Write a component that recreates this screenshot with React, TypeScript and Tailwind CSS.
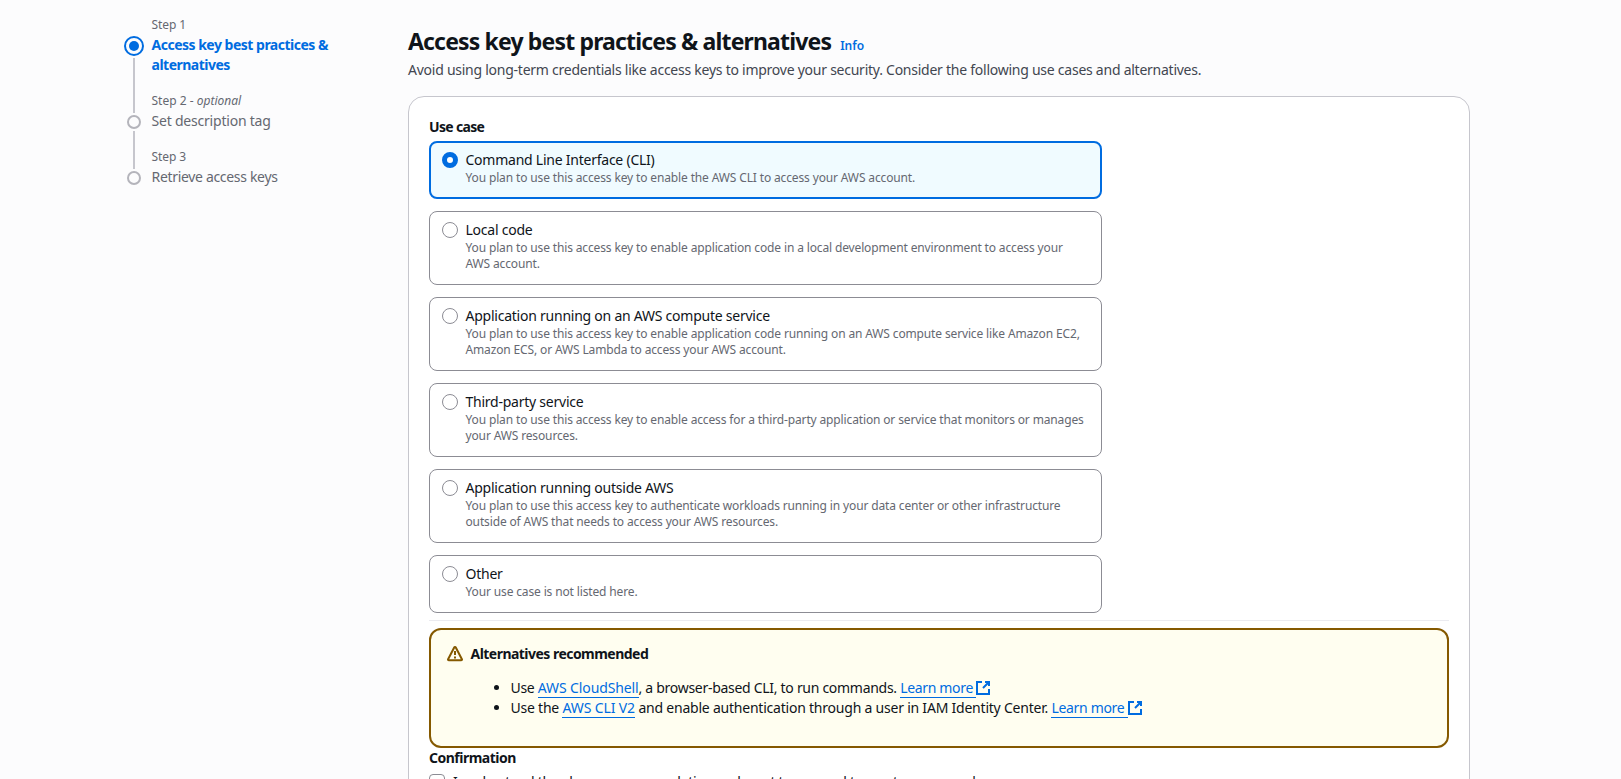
import type { ReactNode } from 'react';

type UseCase = { title: string; description: string };

const useCases: UseCase[] = [
  {
    title: 'Command Line Interface (CLI)',
    description: 'You plan to use this access key to enable the AWS CLI to access your AWS account.',
  },
  {
    title: 'Local code',
    description:
      'You plan to use this access key to enable application code in a local development environment to access your AWS account.',
  },
  {
    title: 'Application running on an AWS compute service',
    description:
      'You plan to use this access key to enable application code running on an AWS compute service like Amazon EC2, Amazon ECS, or AWS Lambda to access your AWS account.',
  },
  {
    title: 'Third-party service',
    description:
      'You plan to use this access key to enable access for a third-party application or service that monitors or manages your AWS resources.',
  },
  {
    title: 'Application running outside AWS',
    description:
      'You plan to use this access key to authenticate workloads running in your data center or other infrastructure outside of AWS that needs to access your AWS resources.',
  },
  { title: 'Other', description: 'Your use case is not listed here.' },
];

function ExternalIcon() {
  return (
    <svg
      viewBox="0 0 16 16"
      className="-ml-px inline-block size-4 align-[-3px]"
      fill="none"
      stroke="#006ce0"
      strokeWidth="2"
    >
      <path d="M10 2h4v4M8 8l6-6" />
      <path d="M14 9v5H2V2h5" />
    </svg>
  );
}

function WarningIcon() {
  return (
    <svg viewBox="0 0 16 16" className="size-4" fill="none" stroke="#855900" strokeWidth="2" strokeLinejoin="round">
      <path d="M7.2 1.5 1.1 13.2c-.3.6.1 1.1.8 1.1h12.2c.7 0 1.1-.5.8-1.1L8.8 1.5c-.3-.6-1.3-.6-1.6 0z" />
      <path d="M8 5v4M8 10.500v2" />
    </svg>
  );
}

function Link({ children }: { children: ReactNode }) {
  return (
    <a href="#" className="border-b border-[#006ce0] tracking-[-0.12px] text-[#006ce0]">
      {children}
    </a>
  );
}

function LearnMore() {
  return (
    <>
      <a href="#" className="border-b border-[#006ce0] tracking-[-0.33px] text-[#006ce0]">
        Learn more&nbsp;
      </a>
      <ExternalIcon />
    </>
  );
}

function Radio({ checked }: { checked: boolean }) {
  return (
    <span
      className={
        checked
          ? 'mt-0.5 size-4 shrink-0 rounded-full border-[5px] border-[#006ce0] bg-white'
          : 'mt-0.5 size-4 shrink-0 rounded-full border border-[#8c8c94] bg-white'
      }
    />
  );
}

function Tile({ item, selected }: { item: UseCase; selected: boolean }) {
  return (
    <label
      className={
        selected
          ? 'flex gap-[7.5px] rounded-lg border-2 border-[#006ce0] bg-[#f0fbff] px-[11px] pt-[7px] pb-[11px]'
          : 'flex gap-[7.5px] rounded-lg border border-[#8c8c94] bg-white px-3 pt-2 pb-3'
      }
    >
      <Radio checked={selected} />
      <span className="block">
        <span className="block text-sm leading-5 tracking-[-0.24px]">{item.title}</span>
        <span className="block text-xs leading-4 tracking-[-0.14px] text-[#656871]">{item.description}</span>
      </span>
    </label>
  );
}

function Steps() {
  return (
    <nav className="w-[220px] pt-[17px]">
      <ol className="text-sm leading-5 text-[#656871]">
        <li className="flex h-[76px] gap-[7.5px]">
          <div className="flex w-5 flex-col items-center pt-[19px]">
            <span className="flex size-5 shrink-0 items-center justify-center rounded-full border-2 border-[#006ce0]">
              <span className="size-2.5 rounded-full bg-[#006ce0]" />
            </span>
            <span className="mt-0.5 w-0.5 grow bg-[#c6c6cd]" />
          </div>
          <div>
            <div className="text-xs leading-4 tracking-[-0.1px]">Step 1</div>
            <div className="mt-0.5 font-bold tracking-[-0.5px] text-[#006ce0]">
              Access key best practices &amp;
              <br />
              alternatives
            </div>
          </div>
        </li>
        <li className="flex h-14 gap-[7.5px]">
          <div className="flex w-5 flex-col items-center">
            <span className="h-5 w-0.5 bg-[#c6c6cd]" />
            <span className="my-0.5 size-3.5 shrink-0 rounded-full border-2 border-[#b4b4bb]" />
            <span className="w-0.5 grow bg-[#c6c6cd]" />
          </div>
          <div>
            <div className="text-xs leading-4 tracking-[0.01px]">
              Step 2 - <i>optional</i>
            </div>
            <div className="mt-0.5 tracking-[-0.21px]">Set description tag</div>
          </div>
        </li>
        <li className="flex h-14 gap-[7.5px]">
          <div className="flex w-5 flex-col items-center">
            <span className="h-5 w-0.5 bg-[#c6c6cd]" />
            <span className="mt-0.5 size-3.5 shrink-0 rounded-full border-2 border-[#b4b4bb]" />
          </div>
          <div>
            <div className="text-xs leading-4 tracking-[-0.1px]">Step 3</div>
            <div className="mt-0.5 tracking-[-0.32px]">Retrieve access keys</div>
          </div>
        </li>
      </ol>
    </nav>
  );
}

export default function App() {
  return (
    <div className="flex h-[779px] gap-16 overflow-hidden bg-[#fcfcfd] pl-[124px] font-['Noto_Sans',sans-serif] text-[#0f141a]">
      <Steps />
      <main className="w-[1062px]">
        <header className="pt-[26px]">
          <div className="flex h-[30px] items-baseline gap-[9px]">
            <h1 className="text-[23px] leading-[30px] font-bold tracking-[-0.84px]">
              Access key best practices &amp; alternatives
            </h1>
            <a href="#" className="text-xs font-semibold text-[#006ce0]">
              Info
            </a>
          </div>
          <p className="mt-1 text-sm leading-5 tracking-[-0.25px] text-[#424650]">
            Avoid using long-term credentials like access keys to improve your security. Consider the following use
            cases and alternatives.
          </p>
        </header>
        <section className="mt-4 h-[760px] rounded-2xl border border-[#c6c6cd] bg-white px-5 pt-5">
          <h2 className="text-sm leading-5 font-bold tracking-[-0.68px]">Use case</h2>
          <div className="mt-1 flex w-[673px] flex-col gap-3">
            {useCases.map((item, index) => (
              <Tile key={item.title} item={item} selected={index === 0} />
            ))}
          </div>
          <hr className="mt-[7px] border-[#ebebf0]" />
          <div className="mt-[7px] h-[120px] rounded-xl border-2 border-[#855900] bg-[#fffef0] px-4 pt-3.5">
            <div className="flex items-center gap-[7.5px]">
              <WarningIcon />
              <strong className="text-sm leading-5 font-bold tracking-[-0.53px]">Alternatives recommended</strong>
            </div>
            <ul className="list-disc pt-3.5 pl-[63.5px] text-sm leading-5">
              <li className="tracking-[-0.29px]">
                Use <Link>AWS CloudShell</Link>, a browser-based CLI, to run commands. <LearnMore />
              </li>
              <li className="tracking-[-0.22px]">
                Use the <Link>AWS CLI V2</Link> and enable authentication through a user in IAM Identity Center.{' '}
                <LearnMore />
              </li>
            </ul>
          </div>
          <h2 className="text-sm leading-5 font-bold tracking-[-0.51px]">Confirmation</h2>
          <label className="mt-1 flex gap-2 text-sm leading-5 tracking-[-0.29px]">
            <span className="mt-0.5 size-4 shrink-0 rounded-[4px] border border-[#8c8c94] bg-white" />
            I understand the above recommendation and want to proceed to create an access key.
          </label>
        </section>
      </main>
    </div>
  );
}
